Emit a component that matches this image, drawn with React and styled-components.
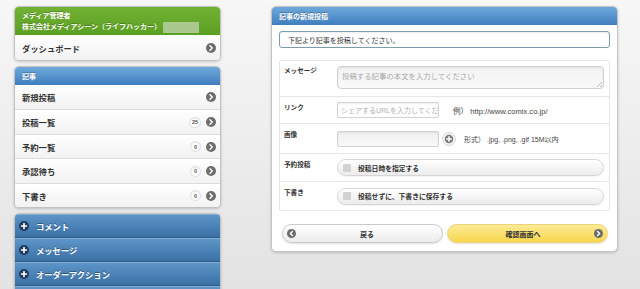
import React from "react";
import styled, { createGlobalStyle } from "styled-components";

const GlobalStyle = createGlobalStyle`
  *, *::before, *::after { box-sizing: border-box; }
  html, body { margin: 0; padding: 0; }
  body {
    width: 640px;
    height: 289px;
    overflow: hidden;
    background: linear-gradient(to bottom, #f7f7f7 0%, #ececec 55%, #e3e3e3 100%);
    font-family: "Liberation Sans", "Noto Sans CJK JP", sans-serif;
    color: #333;
  }
`;

const Page = styled.div`
  display: flex;
  align-items: flex-start;
  gap: 50px;
  padding: 6px 0 0 14px;
`;

const Sidebar = styled.nav`
  width: 207px;
  display: flex;
  flex-direction: column;
  gap: 5px;
`;

const Card = styled.div`
  border: 1px solid #c2c2c2;
  border-radius: 5px;
  overflow: hidden;
  background: #fff;
  box-shadow: 0 1px 3px rgba(0, 0, 0, 0.18);
`;

const OwnerHeader = styled.div`
  height: 28px;
  padding: 3px 7px 0;
  background: linear-gradient(to bottom, #72b234, #5b9f22);
  color: #fff;
  font-size: 7px;
  font-weight: bold;
  line-height: 11px;
  text-shadow: 0 -1px 0 rgba(0, 0, 0, 0.25);
`;

const Redacted = styled.span`
  display: inline-block;
  width: 36px;
  height: 11px;
  margin-left: 2px;
  vertical-align: middle;
  background: #a9c98f;
  filter: blur(0.6px);
`;

const SectionHeader = styled.div`
  height: 18px;
  display: flex;
  align-items: center;
  padding-left: 7px;
  background: linear-gradient(to bottom, #6fa9db, #3f7ebf);
  color: #fff;
  font-size: 7px;
  font-weight: bold;
  text-shadow: 0 -1px 0 rgba(0, 0, 0, 0.3);
`;

const NavRow = styled.div`
  height: ${(p) => p.h || 25}px;
  display: flex;
  align-items: center;
  gap: 5px;
  padding: 0 4px 0 7px;
  border-top: ${(p) => (p.first ? "none" : "1px solid #dcdcdc")};
  background: linear-gradient(to bottom, #ffffff, #f2f2f2);
  font-size: 8.3px;
  font-weight: bold;
  color: #333;
`;

const NavLabel = styled.span`
  flex: 1;
`;

const Count = styled.span`
  min-width: 11px;
  height: 11px;
  padding: 0 2px;
  display: flex;
  align-items: center;
  justify-content: center;
  border: 1px solid #dedede;
  border-radius: 6px;
  background: #fff;
  box-shadow: inset 0 1px 2px rgba(0, 0, 0, 0.08);
  font-family: "Liberation Sans", sans-serif;
  font-size: 5.5px;
  font-weight: bold;
  color: #555;
`;

const BlueBar = styled.div`
  height: ${(p) => p.h || 24}px;
  display: flex;
  align-items: center;
  gap: 7px;
  padding-left: 4px;
  border-top: ${(p) => (p.first ? "none" : "1px solid #2c5b88")};
  box-shadow: inset 0 1px 0 rgba(255, 255, 255, 0.25);
  background: linear-gradient(to bottom, #5e97ca, #3c70a6);
  color: #fff;
  font-size: 8.3px;
  font-weight: bold;
  text-shadow: 0 -1px 0 rgba(0, 0, 0, 0.35);
`;

const Panel = styled.section`
  width: 347px;
  border: 1px solid #c4c4c4;
  border-radius: 5px;
  overflow: hidden;
  background: #fff;
  box-shadow: 0 1px 3px rgba(0, 0, 0, 0.18);
`;

const PanelBody = styled.div`
  padding: 6px 7px 8px;
`;

const Notice = styled.div`
  height: 17px;
  display: flex;
  align-items: center;
  padding-left: 8px;
  border: 1px solid #7f9aaa;
  border-radius: 3px;
  font-size: 7px;
  color: #333;
  box-shadow: inset 0 1px 2px rgba(0, 0, 0, 0.08);
`;

const FormTable = styled.div`
  margin-top: 12px;
  border: 1px solid #e6e6e6;
  border-radius: 2px;
`;

const FormRow = styled.div`
  height: ${(p) => p.h}px;
  display: flex;
  align-items: center;
  padding-right: 5px;
  border-top: ${(p) => (p.first ? "none" : "1px solid #e6e6e6")};
`;

const FieldLabel = styled.div`
  width: 57px;
  align-self: flex-start;
  padding: ${(p) => p.pt || 5}px 0 0 4px;
  font-size: 6.6px;
  font-weight: bold;
  color: #333;
`;

const Field = styled.div`
  flex: 1;
  display: flex;
  align-items: center;
  gap: ${(p) => p.gap || 8}px;
  padding-top: ${(p) => p.pt || 0}px;
  align-self: ${(p) => (p.top ? "flex-start" : "center")};
`;

const TextArea = styled.div`
  width: 100%;
  height: 23px;
  padding: 3px 4px;
  border: 1px solid #cfcfcf;
  border-radius: 4px;
  background: linear-gradient(to bottom, #f2f2f2, #fafafa);
  box-shadow: inset 0 1px 2px rgba(0, 0, 0, 0.08);
  font-size: 7.4px;
  color: #a8a8a8;
  position: relative;
`;

const Grip = styled.span`
  position: absolute;
  right: 1px;
  bottom: 1px;
  width: 5px;
  height: 5px;
  background: linear-gradient(135deg, transparent 45%, #bbb 45%, #bbb 55%, transparent 55%, transparent 75%, #bbb 75%, #bbb 85%, transparent 85%);
`;

const TextInput = styled.div`
  width: 102px;
  height: 16px;
  flex: none;
  padding: 0 3px;
  display: flex;
  align-items: center;
  overflow: hidden;
  white-space: nowrap;
  border: 1px solid #d2d2d2;
  border-radius: 2px;
  background: ${(p) => (p.filled ? "linear-gradient(to bottom, #efefef, #f9f9f9)" : "#fff")};
  box-shadow: inset 0 1px 2px rgba(0, 0, 0, 0.07);
  font-size: 7px;
  color: #b0b0b0;
`;

const Hint = styled.span`
  font-size: ${(p) => p.size || 7}px;
  color: #444;
  white-space: nowrap;
`;

const CheckPill = styled.label`
  width: 100%;
  height: 17px;
  display: flex;
  align-items: center;
  gap: 7px;
  padding-left: 5px;
  border: 1px solid #d6d6d6;
  border-radius: 9px;
  background: linear-gradient(to bottom, #ffffff, #ececec);
  box-shadow: 0 1px 1px rgba(0, 0, 0, 0.05);
  font-size: 6.8px;
  font-weight: bold;
  color: #333;
`;

const Box = styled.span`
  width: 8px;
  height: 8px;
  background: #d2d2d2;
  border-radius: 1px;
`;

const Buttons = styled.div`
  margin-top: 13px;
  padding: 0 2px 0 3px;
  display: grid;
  grid-template-columns: 1fr 1fr;
  gap: 4px;
`;

const Button = styled.button`
  height: 19px;
  display: flex;
  align-items: center;
  padding: 0 4px;
  border: 1px solid ${(p) => (p.primary ? "#ecd37a" : "#c9c9c9")};
  border-radius: 10px;
  background: ${(p) =>
    p.primary
      ? "linear-gradient(to bottom, #fdeb96, #f7d64e)"
      : "linear-gradient(to bottom, #ffffff, #ececec)"};
  box-shadow: 0 1px 2px rgba(0, 0, 0, 0.12);
  font-family: inherit;
  font-size: 7px;
  font-weight: bold;
  color: #333;
`;

const ButtonText = styled.span`
  flex: 1;
  text-align: center;
`;

const Chevron = ({ dir = "right", size = 10, fill = "#6d6d6d" }) => (
  <svg width={size} height={size} viewBox="0 0 20 20" style={{ flex: "none" }}>
    <circle cx="10" cy="10" r="10" fill={fill} />
    <path
      d={dir === "right" ? "M8 5.5 L12.5 10 L8 14.5" : "M12 5.5 L7.5 10 L12 14.5"}
      stroke="#fff"
      strokeWidth="3"
      fill="none"
      strokeLinecap="round"
      strokeLinejoin="round"
    />
  </svg>
);

const PlusDot = ({ size = 10, fill = "#1f3d5c" }) => (
  <svg width={size} height={size} viewBox="0 0 20 20" style={{ flex: "none" }}>
    <circle cx="10" cy="10" r="10" fill={fill} />
    <path d="M10 5 V15 M5 10 H15" stroke="#fff" strokeWidth="3.2" strokeLinecap="round" />
  </svg>
);

const AddButton = () => (
  <svg width="14" height="14" viewBox="0 0 28 28" style={{ flex: "none", marginLeft: -5 }}>
    <circle cx="14" cy="14" r="13" fill="#f3f3f3" stroke="#cfcfcf" strokeWidth="1.5" />
    <circle cx="14" cy="14" r="8.5" fill="#7a7a7a" />
    <path d="M14 9.5 V18.5 M9.5 14 H18.5" stroke="#fff" strokeWidth="3" strokeLinecap="round" />
  </svg>
);

const articleItems = [
  { label: "新規投稿", h: 24 },
  { label: "投稿一覧", count: 25, h: 25 },
  { label: "予約一覧", count: 0, h: 24 },
  { label: "承認待ち", count: 0, h: 25 },
  { label: "下書き", count: 0, h: 24 },
];

const menus = ["コメント", "メッセージ", "オーダーアクション", ""];

const App = () => {
  return (
    <>
      <GlobalStyle />
      <Page>
        <Sidebar>
          <Card>
            <OwnerHeader>
              <div>メディア管理者</div>
              <div>
                株式会社メディアシーン（ライフハッカー）
                <Redacted />
              </div>
            </OwnerHeader>
            <NavRow first h={25}>
              <NavLabel>ダッシュボード</NavLabel>
              <Chevron />
            </NavRow>
          </Card>

          <Card>
            <SectionHeader>記事</SectionHeader>
            {articleItems.map((item, i) => (
              <NavRow key={item.label} first={i === 0} h={item.h}>
                <NavLabel>{item.label}</NavLabel>
                {item.count !== undefined ? <Count>{item.count}</Count> : null}
                <Chevron />
              </NavRow>
            ))}
          </Card>

          <Card>
            {menus.map((label, i) => (
              <BlueBar key={i} first={i === 0} h={i === 0 ? 23 : 24}>
                <PlusDot />
                {label}
              </BlueBar>
            ))}
          </Card>
        </Sidebar>

        <Panel>
          <SectionHeader>記事の新規投稿</SectionHeader>
          <PanelBody>
            <Notice>下記より記事を投稿してください。</Notice>

            <FormTable>
              <FormRow first h={35}>
                <FieldLabel pt={4}>メッセージ</FieldLabel>
                <Field top pt={5}>
                  <TextArea>
                    投稿する記事の本文を入力してください
                    <Grip />
                  </TextArea>
                </Field>
              </FormRow>
              <FormRow h={27}>
                <FieldLabel>リンク</FieldLabel>
                <Field gap={14}>
                  <TextInput>シェアするURLを入力してくださ</TextInput>
                  <Hint size={7.6}>例） http://www.comix.co.jp/</Hint>
                </Field>
              </FormRow>
              <FormRow h={30}>
                <FieldLabel>画像</FieldLabel>
                <Field>
                  <TextInput filled />
                  <AddButton />
                  <Hint>形式） .jpg, .png, .gif 15M以内</Hint>
                </Field>
              </FormRow>
              <FormRow h={28}>
                <FieldLabel>予約投稿</FieldLabel>
                <Field>
                  <CheckPill>
                    <Box />
                    投稿日時を指定する
                  </CheckPill>
                </Field>
              </FormRow>
              <FormRow h={29}>
                <FieldLabel>下書き</FieldLabel>
                <Field>
                  <CheckPill>
                    <Box />
                    投稿せずに、下書きに保存する
                  </CheckPill>
                </Field>
              </FormRow>
            </FormTable>

            <Buttons>
              <Button>
                <Chevron dir="left" size={9} />
                <ButtonText>戻る</ButtonText>
              </Button>
              <Button primary>
                <ButtonText>確認画面へ</ButtonText>
                <Chevron size={9} />
              </Button>
            </Buttons>
          </PanelBody>
        </Panel>
      </Page>
    </>
  );
};

export default App;
